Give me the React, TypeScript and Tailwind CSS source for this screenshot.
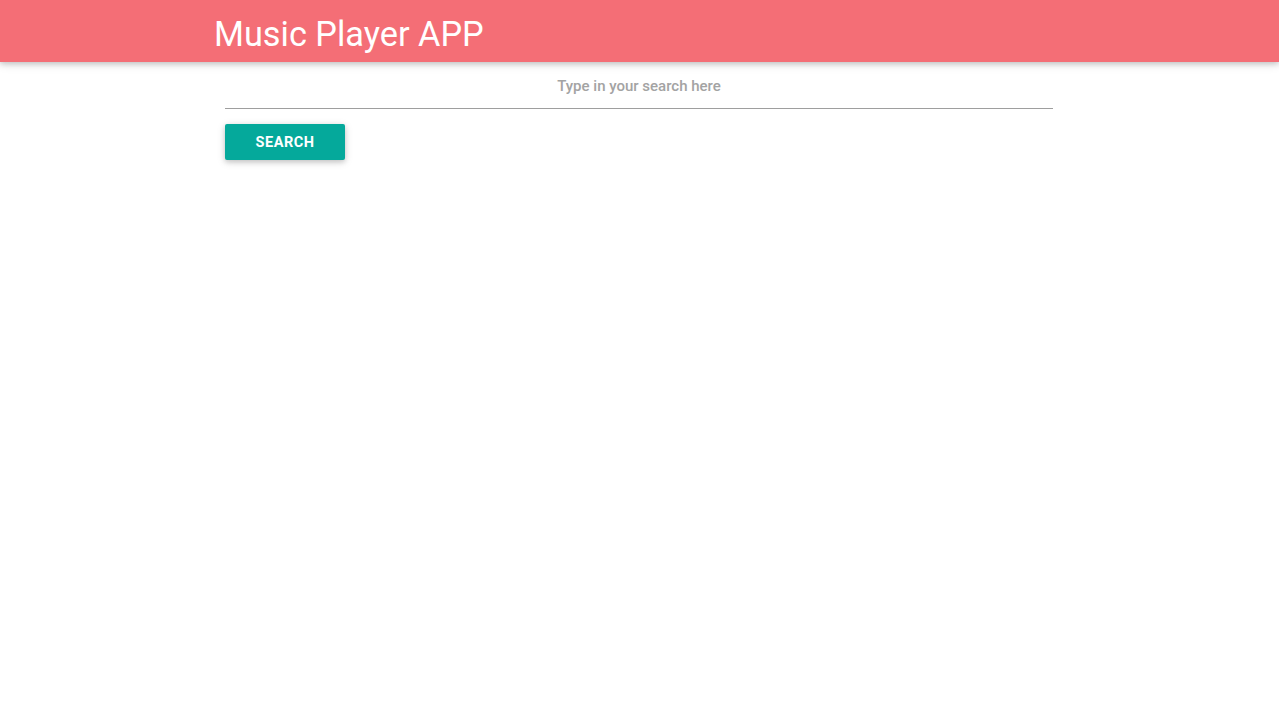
import React from "react";

export default function App() {
  return (
    <div className="min-h-screen bg-white" style={{ fontFamily: "Roboto, 'Liberation Sans', sans-serif" }}>
      <nav className="h-[62px] bg-[#f46e76] shadow-[0_2px_5px_rgba(0,0,0,0.16),0_2px_10px_rgba(0,0,0,0.12)]">
        <div className="mx-auto w-[895px] pl-[22px]">
          <span className="block text-[34.3px] leading-[68px] text-white">Music Player APP</span>
        </div>
      </nav>
      <div className="mx-auto w-[829px] pr-[1px] pt-[10px]">
        <input
          type="text"
          placeholder="Type in your search here"
          className="block h-[37px] w-full border-b border-[#9e9e9e] bg-transparent pb-[9px] text-center text-[15px] font-medium text-[#333] outline-none placeholder:text-[#a3a3a3]"
        />
        <button className="mt-[15px] h-[36px] w-[120px] rounded-[2px] bg-[#05a99b] pt-[2px] text-[14.5px] font-bold tracking-[0.5px] text-white shadow-[0_2px_5px_rgba(0,0,0,0.16),0_2px_10px_rgba(0,0,0,0.12)]">
          SEARCH
        </button>
      </div>
    </div>
  );
}
